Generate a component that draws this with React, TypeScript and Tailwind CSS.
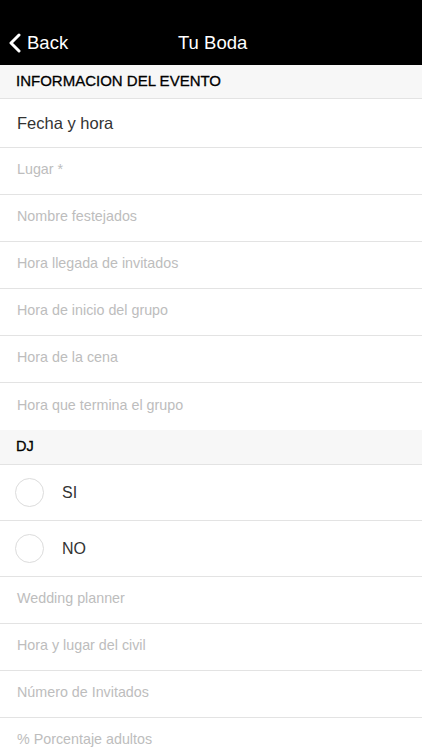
import React from 'react';

const grupoUno = [
  'Lugar *',
  'Nombre festejados',
  'Hora llegada de invitados',
  'Hora de inicio del grupo',
  'Hora de la cena',
];

const grupoDos = [
  'Wedding planner',
  'Hora y lugar del civil',
  'Número de Invitados',
  '% Porcentaje adultos',
];

function Placeholder({ label, last }: { label: string; last?: boolean }) {
  return (
    <div
      className={`flex h-[47px] items-center px-[17px] pb-[2px] text-[14.3px] text-[#bdbdbd] ${
        last ? '' : 'border-b border-[#e3e3e3]'
      }`}
    >
      {label}
    </div>
  );
}

function Radio({ label }: { label: string }) {
  return (
    <div className="flex h-[56px] items-center border-b border-[#e3e3e3] pl-[15px]">
      <span className="h-[29px] w-[29px] rounded-full border border-[#dcdcdc] bg-white" />
      <span className="ml-[18px] text-[16px] text-[#333]">{label}</span>
    </div>
  );
}

export default function App() {
  return (
    <div className="h-[750px] w-[422px] overflow-hidden bg-white font-['Liberation_Sans',Arial,sans-serif]">
      <div className="h-[65px] bg-black pt-[20px]">
        <div className="relative flex h-[45px] items-center">
          <div className="flex items-center pl-[8px] text-white">
            <svg width="13" height="20" viewBox="0 0 13 20" fill="none">
              <path d="M11 2 L3 10 L11 18" stroke="white" strokeWidth="3" strokeLinecap="round" strokeLinejoin="round" />
            </svg>
            <span className="ml-[6px] text-[18.5px]">Back</span>
          </div>
          <div className="absolute left-[178px] text-[18.5px] text-white">Tu Boda</div>
        </div>
      </div>

      <div className="flex h-[34px] items-center border-b border-[#e3e3e3] bg-[#f7f7f7] px-[16px] text-[15px] text-black [-webkit-text-stroke:0.3px_black]">
        INFORMACION DEL EVENTO
      </div>
      <div className="flex h-[49px] items-center border-b border-[#e3e3e3] px-[17px] text-[16.5px] text-[#333]">
        Fecha y hora
      </div>
      {grupoUno.map((l) => (
        <Placeholder key={l} label={l} />
      ))}
      <Placeholder label="Hora que termina el grupo" last />

      <div className="flex h-[35px] items-center border-b border-[#e3e3e3] bg-[#f7f7f7] px-[16px] text-[14.5px] text-black [-webkit-text-stroke:0.3px_black]">
        DJ
      </div>
      <Radio label="SI" />
      <Radio label="NO" />
      {grupoDos.map((l) => (
        <Placeholder key={l} label={l} />
      ))}
    </div>
  );
}
